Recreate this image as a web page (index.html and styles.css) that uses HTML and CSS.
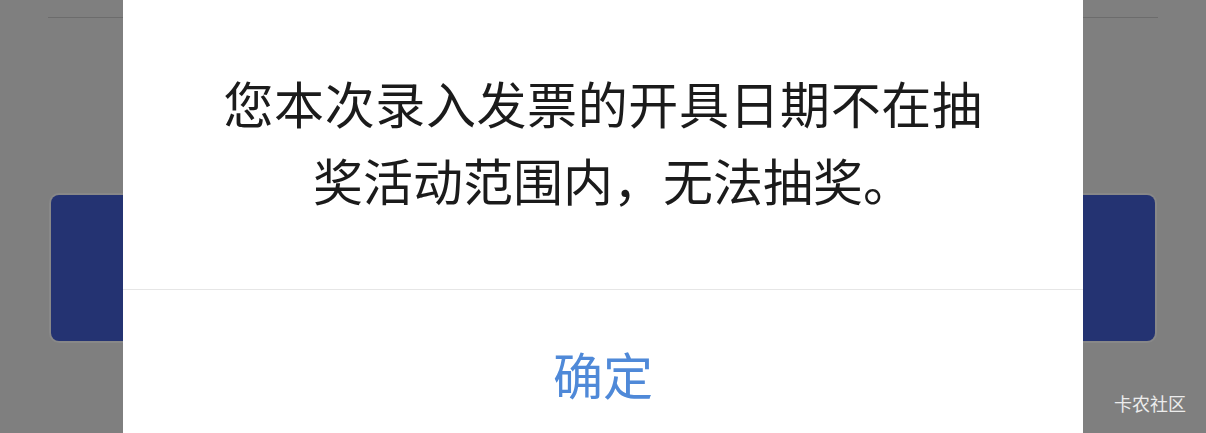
FILE: index.html
```html
<!DOCTYPE html>
<html lang="zh">
<head>
<meta charset="utf-8">
<link rel="stylesheet" href="styles.css">
</head>
<body>
<div class="page">
  <div class="rule"></div>
  <div class="card"></div>
</div>
<div class="dialog">
  <div class="message">
    <div class="line">您本次录入发票的开具日期不在抽</div>
    <div class="line line-last">奖活动范围内，无法抽奖。</div>
  </div>
  <div class="actions"><span class="confirm">确定</span></div>
</div>
<div class="watermark">卡农社区</div>
</body>
</html>
```
FILE: styles.css
```css
html, body {
  margin: 0;
  padding: 0;
  width: 1206px;
  height: 433px;
  overflow: hidden;
  background: #7f7f7f;
  font-family: "Noto Sans CJK SC", "Noto Sans", sans-serif;
}
.page {
  padding: 17px 48px 0 48px;
}
.rule {
  height: 1px;
  background: #6c6c6c;
}
.card {
  margin: 177px 3px 0 3px;
  height: 146px;
  background: #243372;
  border-radius: 8px;
  box-shadow: 0 0 0 2px #888888;
}
.dialog {
  position: absolute;
  left: 123px;
  top: 0;
  width: 960px;
  height: 433px;
  background: #ffffff;
  display: flex;
  flex-direction: column;
}
.message {
  height: 290px;
  box-sizing: border-box;
  padding-top: 64px;
  text-align: center;
  font-size: 50px;
  letter-spacing: 0.6px;
  line-height: 77px;
  color: #1b1b1b;
  border-bottom: 1px solid #e6e6e6;
}
.line-last {
  padding-left: 20px;
  letter-spacing: 0;
}
.actions {
  text-align: center;
  padding-top: 45px;
}
.confirm {
  font-size: 50px;
  line-height: 76px;
  color: #4f89d8;
}
.watermark {
  position: absolute;
  left: 1114px;
  top: 390px;
  font-size: 18px;
  line-height: 26px;
  color: #ececec;
}
```
